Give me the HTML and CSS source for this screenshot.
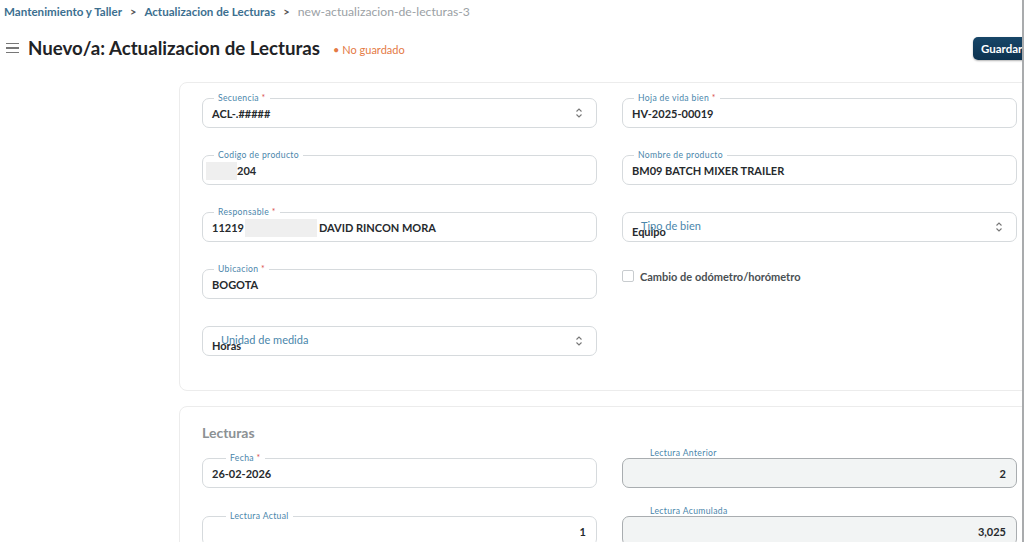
FILE: index.html
```html
<!DOCTYPE html>
<html lang="es">
<head>
    <meta charset="UTF-8">
    <meta name="viewport" content="width=device-width, initial-scale=1.0">
    <title>Nuevo/a: Actualizacion de Lecturas</title>
    <link rel="stylesheet" href="styles.css">
</head>
<body>
<div class="screen">
<div class="page">

    <nav class="breadcrumb">
        <a href="#">Mantenimiento y Taller</a>
        <span class="sep">&gt;</span>
        <a href="#">Actualizacion de Lecturas</a>
        <span class="sep">&gt;</span>
        <span class="current">new-actualizacion-de-lecturas-3</span>
    </nav>

    <header class="title-bar">
        <span class="menu-icon"><i></i><i></i><i></i></span>
        <h1>Nuevo/a: Actualizacion de Lecturas</h1>
        <span class="status">&bull; No guardado</span>
        <button class="btn-save">Guardar</button>
    </header>

    <main class="content">
        <section class="card card-main">
            <div class="form-grid">
                <div class="field">
                    <span class="field-label">Secuencia <em>*</em></span>
                    <span class="field-value">ACL-.#####</span>
                    <svg class="select-arrows" width="8" height="12" viewBox="0 0 8 12"><path d="M1.5 4.5 4 2l2.5 2.5M1.5 7.5 4 10l2.5-2.5" fill="none" stroke="#777" stroke-width="1.1"/></svg>
                </div>
                <div class="field">
                    <span class="field-label">Hoja de vida bien <em>*</em></span>
                    <span class="field-value">HV-2025-00019</span>
                </div>

                <div class="field">
                    <span class="field-label">Codigo de producto</span>
                    <span class="field-value"><span class="masked masked-code"></span>204</span>
                </div>
                <div class="field">
                    <span class="field-label">Nombre de producto</span>
                    <span class="field-value">BM09 BATCH MIXER TRAILER</span>
                </div>

                <div class="field">
                    <span class="field-label">Responsable <em>*</em></span>
                    <span class="field-value">11219<span class="masked masked-name"></span>DAVID RINCON MORA</span>
                </div>
                <div class="field field-select">
                    <span class="inner-label">Tipo de bien</span>
                    <span class="field-value">Equipo</span>
                    <svg class="select-arrows" width="8" height="12" viewBox="0 0 8 12"><path d="M1.5 4.5 4 2l2.5 2.5M1.5 7.5 4 10l2.5-2.5" fill="none" stroke="#777" stroke-width="1.1"/></svg>
                </div>

                <div class="field">
                    <span class="field-label">Ubicacion <em>*</em></span>
                    <span class="field-value">BOGOTA</span>
                </div>
                <label class="check-row">
                    <span class="checkbox"></span>
                    Cambio de odómetro/horómetro
                </label>

                <div class="field field-select">
                    <span class="inner-label">Unidad de medida</span>
                    <span class="field-value">Horas</span>
                    <svg class="select-arrows" width="8" height="12" viewBox="0 0 8 12"><path d="M1.5 4.5 4 2l2.5 2.5M1.5 7.5 4 10l2.5-2.5" fill="none" stroke="#777" stroke-width="1.1"/></svg>
                </div>
            </div>
        </section>

        <section class="card card-readings">
            <h2>Lecturas</h2>
            <div class="form-grid readings-grid">
                <div class="field field-wide">
                    <span class="field-label">Fecha <em>*</em></span>
                    <span class="field-value">26-02-2026</span>
                </div>
                <div class="readonly">
                    <span class="top-label">Lectura Anterior</span>
                    <div class="field field-readonly">
                        <span class="field-value num">2</span>
                    </div>
                </div>

                <div class="field field-wide">
                    <span class="field-label">Lectura Actual</span>
                    <span class="field-value num">1</span>
                </div>
                <div class="readonly">
                    <span class="top-label">Lectura Acumulada</span>
                    <div class="field field-readonly">
                        <span class="field-value num">3,025</span>
                    </div>
                </div>
            </div>
        </section>
    </main>

</div>
</div>
</body>
</html>
```

FILE: styles.css
```css
:root {
    --link-blue: #3c6f8f;
    --label-blue: #4a86ab;
    --ink: #262a2d;
    --line: #d6dadd;
    --navy: #123c5c;
    --warn: #e47a45;
}
body {
    margin: 0;
    background: #fff;
    font-family: Lato, "Open Sans", sans-serif;
    color: var(--ink);
}
.screen {
    width: 1022px;
    height: 542px;
    overflow: hidden;
    border-right: 2px solid #a9abad;
}
.page {
    width: 1060px;
}

/* breadcrumb */
.breadcrumb {
    display: flex;
    align-items: center;
    gap: 8px;
    padding: 3px 0 0 4px;
    height: 17px;
    font-size: 11.6px;
    font-weight: 700;
}
.breadcrumb a {
    color: var(--link-blue);
    text-decoration: none;
}
.breadcrumb .sep {
    color: #555;
    font-size: 11px;
}
.breadcrumb .current {
    color: #9ba1a5;
    font-weight: 400;
    font-size: 12.2px;
}

/* title row */
.title-bar {
    display: flex;
    align-items: center;
    height: 24px;
    margin-top: 16px;
    padding: 0 25px 0 6px;
}
.menu-icon {
    display: flex;
    flex-direction: column;
    gap: 3px;
    width: 13px;
    margin-right: 9px;
}
.menu-icon i {
    height: 1.6px;
    background: #777;
}
.title-bar h1 {
    margin: 0;
    font-size: 18.7px;
    font-weight: 700;
    color: #1f2326;
}
.status {
    margin-left: 13px;
    font-size: 11px;
    color: var(--warn);
    padding-top: 2px;
}
.btn-save {
    margin-left: auto;
    width: 62px;
    height: 23px;
    border: 0;
    border-radius: 5px;
    background: linear-gradient(#174668, #0d3250);
    color: #fff;
    font: 700 11.5px Lato, sans-serif;
    text-align: left;
    padding-left: 8px;
    box-shadow: 0 1px 2px rgba(0,0,0,0.3);
}

/* cards */
.content {
    padding-left: 179px;
    margin-top: 22px;
}
.card {
    width: 859px;
    box-sizing: border-box;
    border: 1px solid #ececec;
    border-radius: 8px;
    background: #fff;
    padding: 15px 22px 34px;
}
.card-readings {
    margin-top: 15px;
    padding-top: 19px;
}
.card-readings h2 {
    margin: 0 0 8px;
    font-size: 14px;
    line-height: 14px;
    font-weight: 700;
    color: #8c9194;
}
.form-grid {
    display: grid;
    grid-template-columns: 395px 395px;
    column-gap: 25px;
    row-gap: 27px;
}
.readings-grid {
    row-gap: 18px;
    align-items: end;
}

/* inputs */
.field {
    position: relative;
    box-sizing: border-box;
    height: 30px;
    border: 1px solid var(--line);
    border-radius: 7px;
    padding: 0 10px 0 9px;
    display: flex;
    align-items: center;
}
.field-label {
    position: absolute;
    top: -6px;
    left: 11px;
    padding: 0 4px;
    background: #fff;
    font-size: 8.6px;
    letter-spacing: 0.35px;
    line-height: 10px;
    color: var(--label-blue);
}
.field-wide .field-label {
    left: 23px;
}
.field-label em {
    font-style: normal;
    color: #d9534f;
}
.field-value {
    font-size: 11px;
    font-weight: 700;
    color: var(--ink);
    padding-top: 1px;
    display: flex;
    align-items: center;
}
.masked {
    display: inline-block;
    height: 18px;
    background: #efefef;
}
.masked-code {
    width: 31px;
    margin-left: -6px;
}
.masked-name {
    width: 72px;
    margin: 0 2px 0 1px;
}
.select-arrows {
    position: absolute;
    right: 13px;
    top: 8px;
}

/* select whose label sits inside the box */
.field-select .inner-label {
    position: absolute;
    top: 6px;
    left: 18px;
    font-size: 11px;
    color: var(--label-blue);
}
.field-select .field-value {
    padding-top: 9px;
}

.check-row {
    display: flex;
    align-items: center;
    gap: 6px;
    height: 14px;
    font-size: 11px;
    font-weight: 700;
    color: #4a4f53;
    align-self: start;
}
.checkbox {
    width: 10px;
    height: 10px;
    border: 1px solid #c8cccf;
    border-radius: 2px;
}

/* read-only numbers */
.num {
    margin-left: auto;
}
.top-label {
    display: block;
    padding-left: 28px;
    font-size: 8.6px;
    letter-spacing: 0.35px;
    line-height: 10px;
    color: var(--label-blue);
}
.field-readonly {
    background: #f2f4f4;
    border-color: #a9adb0;
}
.field-readonly .field-value {
    padding-top: 0;
}
```
